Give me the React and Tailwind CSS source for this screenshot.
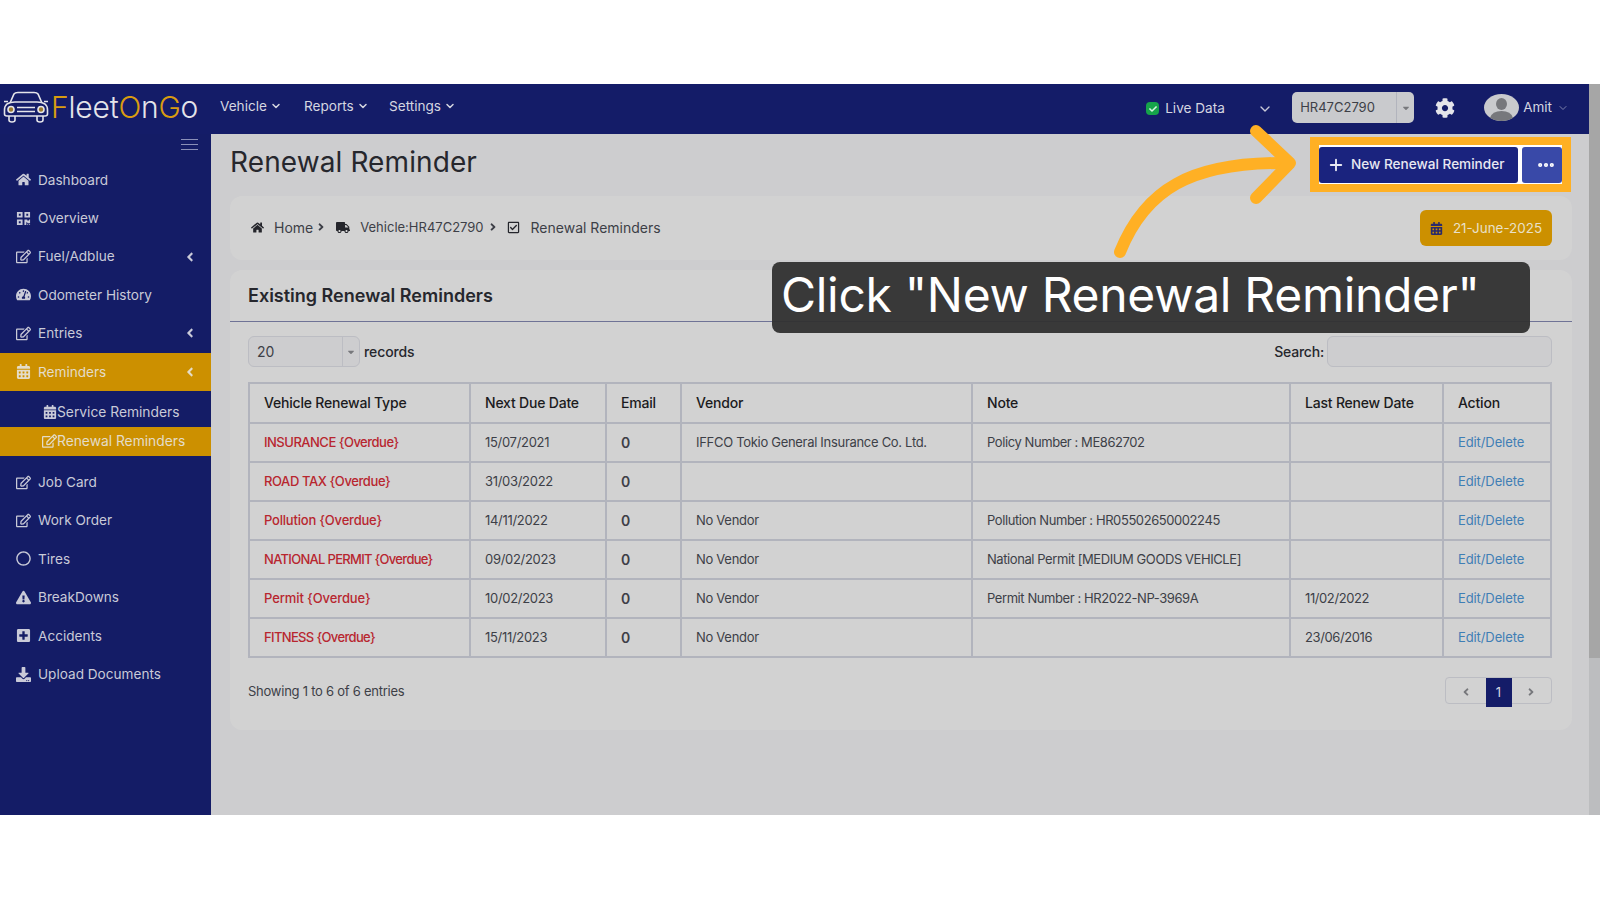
import React from "react";
import {
  FaHome,
  FaQrcode,
  FaRegEdit,
  FaTachometerAlt,
  FaCalendarAlt,
  FaRegCircle,
  FaExclamationTriangle,
  FaPlusSquare,
  FaDownload,
  FaCog,
  FaTruck,
  FaRegCheckSquare,
  FaCheck,
  FaAngleLeft,
  FaAngleRight,
  FaCaretDown,
} from "react-icons/fa";
import { ChevronDown, Plus, Ellipsis } from "lucide-react";

const topItems = [
  { label: "Dashboard", icon: FaHome },
  { label: "Overview", icon: FaQrcode },
  { label: "Fuel/Adblue", icon: FaRegEdit, arrow: true },
  { label: "Odometer History", icon: FaTachometerAlt },
  { label: "Entries", icon: FaRegEdit, arrow: true },
];

const bottomItems = [
  { label: "Job Card", icon: FaRegEdit },
  { label: "Work Order", icon: FaRegEdit },
  { label: "Tires", icon: FaRegCircle },
  { label: "BreakDowns", icon: FaExclamationTriangle },
  { label: "Accidents", icon: FaPlusSquare },
  { label: "Upload Documents", icon: FaDownload },
];

const rows = [
  { type: "INSURANCE {Overdue}", fit: "tracking-[-0.5px]", due: "15/07/2021", vendor: "IFFCO Tokio General Insurance Co. Ltd.", note: "Policy Number : ME862702", last: "" },
  { type: "ROAD TAX {Overdue}", fit: "tracking-[-0.4px]", due: "31/03/2022", vendor: "", note: "", last: "" },
  { type: "Pollution {Overdue}", fit: "tracking-[-0.2px]", due: "14/11/2022", vendor: "No Vendor", note: "Pollution Number : HR05502650002245", last: "" },
  { type: "NATIONAL PERMIT {Overdue}", fit: "tracking-[-0.7px]", due: "09/02/2023", vendor: "No Vendor", note: "National Permit [MEDIUM GOODS VEHICLE]", last: "" },
  { type: "Permit {Overdue}", fit: "tracking-[-0.1px]", due: "10/02/2023", vendor: "No Vendor", note: "Permit Number : HR2022-NP-3969A", last: "11/02/2022" },
  { type: "FITNESS {Overdue}", fit: "tracking-[-0.65px]", due: "15/11/2023", vendor: "No Vendor", note: "", last: "23/06/2016" },
];

const SideItem = ({ item }) => {
  const Icon = item.icon;
  return (
    <div className="flex h-[38.4px] items-center pl-[13px] pr-4 text-[13.6px] text-[#c9cad8]">
      <span className="flex w-[21px] justify-center">
        <Icon className="h-[15px] w-[15px]" />
      </span>
      <span className="ml-[4px] flex-1">{item.label}</span>
      {item.arrow && <FaAngleLeft className="h-[14px] w-[10px]" />}
    </div>
  );
};

const CarLogo = () => (
  <svg width="46" height="32" viewBox="0 0 46 32" fill="none" stroke="#e4e4ea" strokeWidth="1.6">
    <path d="M7 12 L11 3 Q12 1.5 15 1.5 H31 Q34 1.5 35 3 L39 12" />
    <path d="M4 13 Q7 11 12 11 H34 Q39 11 42 13 Q44.5 15 44.5 19 V23 Q44.5 25 42 25 H4 Q1.5 25 1.5 23 V19 Q1.5 15 4 13 Z" />
    <path d="M6 25 V29 Q6 31 9 31 Q12 31 12 29 V25 M34 25 V29 Q34 31 37 31 Q40 31 40 29 V25" />
    <path d="M14 16.5 H32 M14 20.5 H32" />
    <circle cx="8" cy="18.5" r="3" fill="#9b7a2c" />
    <circle cx="38" cy="18.5" r="3" fill="#9b7a2c" />
    <path d="M1 10.5 H5 M41 10.5 H45" />
  </svg>
);

const Avatar = () => (
  <svg width="35" height="27" viewBox="0 0 35 27">
    <ellipse cx="17.5" cy="13.5" rx="17.5" ry="13.5" fill="#c9cacd" />
    <ellipse cx="17.5" cy="10" rx="5.5" ry="6" fill="#77787c" />
    <path d="M6 24 Q8 17 17.5 17 Q27 17 29 24 Q24 27 17.5 27 Q11 27 6 24 Z" fill="#77787c" />
  </svg>
);

const Header = () => (
  <header className="flex h-[50px] items-center bg-[#141c68] text-[13.6px] text-[#d5d6e0]">
    <div className="-mt-[4px] flex w-[220px] items-center pl-[3px]">
      <CarLogo />
      <span className="ml-[2px] text-[30px] font-light leading-none tracking-[-0.2px] text-[#e4e4ea]">
        <span className="text-[#d99c10]">F</span>leet<span className="text-[#d99c10]">O</span>n
        <span className="text-[#d99c10]">G</span>o
      </span>
    </div>
    <nav className="-mt-[6px] flex items-center">
      <span className="flex w-[84px] items-center gap-[3px]">
        Vehicle <ChevronDown className="h-3 w-3" strokeWidth={3} />
      </span>
      <span className="flex w-[85px] items-center gap-[3px]">
        Reports <ChevronDown className="h-3 w-3" strokeWidth={3} />
      </span>
      <span className="flex items-center gap-[3px]">
        Settings <ChevronDown className="h-3 w-3" strokeWidth={3} />
      </span>
    </nav>
    <div className="-mt-[3px] ml-auto flex items-center">
      <span className="mt-[2px] flex h-[13px] w-[13px] items-center justify-center rounded-sm bg-[#16a34a]">
        <FaCheck className="h-2 w-2 text-[#d5f5e0]" />
      </span>
      <span className="ml-[6px] mt-[2px] w-[92px]">Live Data</span>
      <ChevronDown className="mt-[2px] h-4 w-4 text-[#c9cad8]" />
      <div className="ml-[19px] flex h-[31px] w-[122px] rounded-[5px] bg-[#c9cacd] text-[#3d3f47]">
        <span className="flex w-[105px] items-center border-r border-[#b2b4bd] pl-[8px] text-[13px]">HR47C2790</span>
        <span className="flex flex-1 items-center justify-center">
          <FaCaretDown className="h-[10px] w-[8px] text-[#77787c]" />
        </span>
      </div>
      <FaCog className="ml-[21px] h-5 w-5 text-[#e4e4ea]" />
      <span className="ml-[29px] flex">
        <Avatar />
      </span>
      <span className="ml-1 text-[13.5px]">Amit</span>
      <ChevronDown className="ml-[5px] mr-[20px] h-3 w-3 text-[#7d82ad]" />
    </div>
  </header>
);

const Sidebar = () => (
  <aside className="w-[211px] shrink-0 bg-[#141c66]">
    <div className="flex h-[26.6px] justify-end pr-[13px] pt-[5px]">
      <div className="flex h-[11px] w-[17px] flex-col justify-between">
        <span className="h-px bg-[#8a8fb8]" />
        <span className="h-px bg-[#8a8fb8]" />
        <span className="h-px bg-[#8a8fb8]" />
      </div>
    </div>
    {topItems.map((item) => (
      <SideItem key={item.label} item={item} />
    ))}
    <div className="flex h-[38.4px] items-center bg-[#cc9000] pl-[13px] pr-4 text-[13.6px] text-[#e4dcc8]">
      <span className="flex w-[21px] justify-center">
        <FaCalendarAlt className="h-[15px] w-[15px]" />
      </span>
      <span className="ml-[4px] flex-1">Reminders</span>
      <FaAngleLeft className="h-[14px] w-[10px]" />
    </div>
    <div className="py-[7px] text-[13.8px]">
      <div className="flex h-[29px] items-center pl-[43px] text-[#c9cad8]">
        <FaCalendarAlt className="h-[14px] w-[14px]" />
        <span>Service Reminders</span>
      </div>
      <div className="flex h-[29px] items-center bg-[#cc9000] pl-[42px] text-[#e4dcc8]">
        <FaRegEdit className="h-[14px] w-[15px]" />
        <span>Renewal Reminders</span>
      </div>
    </div>
    {bottomItems.map((item) => (
      <SideItem key={item.label} item={item} />
    ))}
  </aside>
);

const Breadcrumb = () => (
  <div className="flex h-[64px] items-center justify-between rounded-xl bg-[#d2d2d2] pl-[21px] pr-[20px] text-[14px] text-[#3d3f47]">
    <div className="-mt-[2px] flex items-center">
      <FaHome className="h-[13px] w-[13px] text-[#24252b]" />
      <span className="ml-[10px]">Home</span>
      <FaAngleRight className="ml-[4px] h-3 w-2" />
      <FaTruck className="ml-[11px] h-[13px] w-[14px] text-[#24252b]" />
      <span className="ml-[10px] mt-[1px] text-[13px]">Vehicle:HR47C2790</span>
      <FaAngleRight className="ml-[5px] h-3 w-2" />
      <FaRegCheckSquare className="ml-[10px] h-[13px] w-[13px] text-[#24252b]" />
      <span className="ml-[11px]">Renewal Reminders</span>
    </div>
    <div className="flex h-[36px] w-[132px] items-center justify-center gap-[10px] rounded-md bg-[#cc9000] text-[13.4px] text-[#e9e0c8]">
      <FaCalendarAlt className="h-[13px] w-[13px] text-[#2a2a6a]" />
      21-June-2025
    </div>
  </div>
);

const thClass = "border-2 border-[#b2b4bd] pb-[2px] pl-[14px] text-left text-[14px] font-medium tracking-[-0.2px] text-[#1b1b20]";
const tdClass = "border-2 border-[#b2b4bd] pl-[14px] text-[13px] text-[#3d3f47]";

const RenewalTable = () => (
  <table className="w-[1302px] table-fixed border-collapse">
    <colgroup>
      <col className="w-[221px]" />
      <col className="w-[136px]" />
      <col className="w-[75px]" />
      <col className="w-[291px]" />
      <col className="w-[318px]" />
      <col className="w-[153px]" />
      <col className="w-[108px]" />
    </colgroup>
    <thead>
      <tr className="h-[40px]">
        <th className={thClass}>Vehicle Renewal Type</th>
        <th className={thClass}>Next Due Date</th>
        <th className={thClass}>Email</th>
        <th className={thClass}>Vendor</th>
        <th className={thClass}>Note</th>
        <th className={thClass}>Last Renew Date</th>
        <th className={thClass}>Action</th>
      </tr>
    </thead>
    <tbody>
      {rows.map((row) => (
        <tr key={row.type} className="h-[39px]">
          <td className={`${tdClass} font-medium text-[#b8262f] ${row.fit}`}>{row.type}</td>
          <td className={`${tdClass} tracking-[-0.3px]`}>{row.due}</td>
          <td className={`${tdClass} text-[14px] font-semibold text-[#1b1b20]`}>0</td>
          <td className={`${tdClass} tracking-[-0.3px]`}>{row.vendor}</td>
          <td className={`${tdClass} tracking-[-0.42px]`}>{row.note}</td>
          <td className={`${tdClass} tracking-[-0.4px]`}>{row.last}</td>
          <td className={`${tdClass} tracking-[-0.1px] text-[#3f7eb5]`}>Edit/Delete</td>
        </tr>
      ))}
    </tbody>
  </table>
);

const ExistingCard = () => (
  <section className="mt-[10px] h-[460px] rounded-xl bg-[#d2d2d2]">
    <div className="flex h-[52px] items-center border-b border-[#6f7396] pl-[18px] text-[18px] font-semibold text-[#26272d]">
      Existing Renewal Reminders
    </div>
    <div className="pl-[18px] pr-[20px]">
      <div className="flex h-[59px] items-center justify-between text-[14px] text-[#26272d]">
        <div className="flex items-center">
          <div className="flex h-[31px] w-[112px] rounded-md border border-[#bcbdc3] bg-[#cdcdcf]">
            <span className="flex flex-1 items-center border-r border-[#bcbdc3] pl-[8px] text-[#3d3f47]">20</span>
            <span className="flex w-[16px] items-center justify-center">
              <FaCaretDown className="h-[10px] w-[8px] text-[#77787c]" />
            </span>
          </div>
          <span className="ml-1 font-medium tracking-[-0.1px]">records</span>
        </div>
        <div className="flex items-center">
          <span className="mr-[3px] font-medium tracking-[-0.2px]">Search:</span>
          <div className="h-[31px] w-[225px] rounded-md border border-[#bcbdc3] bg-[#cdcdcf]" />
        </div>
      </div>
      <div className="mt-px">
        <RenewalTable />
      </div>
      <div className="mt-[19px] flex items-start justify-between text-[13px] text-[#3d3f47]">
        <span className="mt-[5px] tracking-[-0.25px]">Showing 1 to 6 of 6 entries</span>
        <div className="flex h-[27px] w-[107px] items-start rounded-sm border border-[#bcbdc3]">
          <span className="flex h-[27px] flex-1 items-center justify-center text-[#77787c]">
            <FaAngleLeft className="h-3 w-2" />
          </span>
          <span className="flex h-[29px] w-[26px] items-center justify-center bg-[#141c68] text-[#d5d6e0]">1</span>
          <span className="flex h-[27px] flex-1 items-center justify-center text-[#77787c]">
            <FaAngleRight className="h-3 w-2" />
          </span>
        </div>
      </div>
    </div>
  </section>
);

const Main = () => (
  <main className="flex-1 bg-[#cdcdcf] pl-[19px] pr-[19px]">
    <div className="flex h-[62px] items-start justify-between">
      <h1 className="mt-[9px] text-[28px] font-normal leading-[38px] tracking-[0.1px] text-[#26272d]">Renewal Reminder</h1>
      <div className="mr-px mt-[3px] flex h-[55px] w-[261px] items-center gap-1 border-y-[8px] border-l-[9px] border-r-[9px] border-[#ffb024] bg-white">
        <button
          type="button"
          className="flex h-[36px] w-[199px] items-center justify-start gap-[6px] rounded-[3px] bg-[#1a237e] pl-[8px] text-[13.6px] font-medium text-[#e8e8f2]"
        >
          <Plus className="h-[18px] w-[18px]" strokeWidth={2.5} />
          New Renewal Reminder
        </button>
        <button
          type="button"
          className="flex h-[36px] flex-1 items-center justify-center rounded-[3px] bg-[#3949a8] pl-[8px] text-white"
        >
          <Ellipsis className="h-[20px] w-[20px]" strokeWidth={3} />
        </button>
      </div>
    </div>
    <Breadcrumb />
    <ExistingCard />
  </main>
);

const Scrollbar = () => (
  <div className="w-[11px] shrink-0 bg-[#bcbdbf]">
    <div className="h-[574px] bg-[#a6a6a6]" />
  </div>
);

export default function App() {
  return (
    <div className="relative h-[900px] w-[1600px] overflow-hidden bg-white pt-[84px] font-['Inter',sans-serif]">
      <div className="flex h-[731px]">
        <div className="flex min-w-0 flex-1 flex-col">
          <Header />
          <div className="flex flex-1">
            <Sidebar />
            <Main />
          </div>
        </div>
        <Scrollbar />
      </div>

      {/* arrow pointing at the button */}
      <svg className="absolute left-[1100px] top-[120px]" width="210" height="145" viewBox="0 0 210 145" fill="none">
        <path
          d="M20 132 C45 70 90 42 186 43"
          stroke="#ffb024"
          strokeWidth="12"
          strokeLinecap="round"
        />
        <path
          d="M156 11 L190 43 L156 78"
          stroke="#ffb024"
          strokeWidth="12"
          strokeLinecap="round"
          strokeLinejoin="round"
        />
      </svg>

      {/* callout */}
      <div className="absolute left-[772px] top-[262px] flex h-[71px] w-[758px] items-center rounded-lg bg-[#303030]/95 pb-[6px] pl-[9px] text-[48px] leading-none tracking-[-0.3px] text-white">
        Click "New Renewal Reminder"
      </div>
    </div>
  );
}
